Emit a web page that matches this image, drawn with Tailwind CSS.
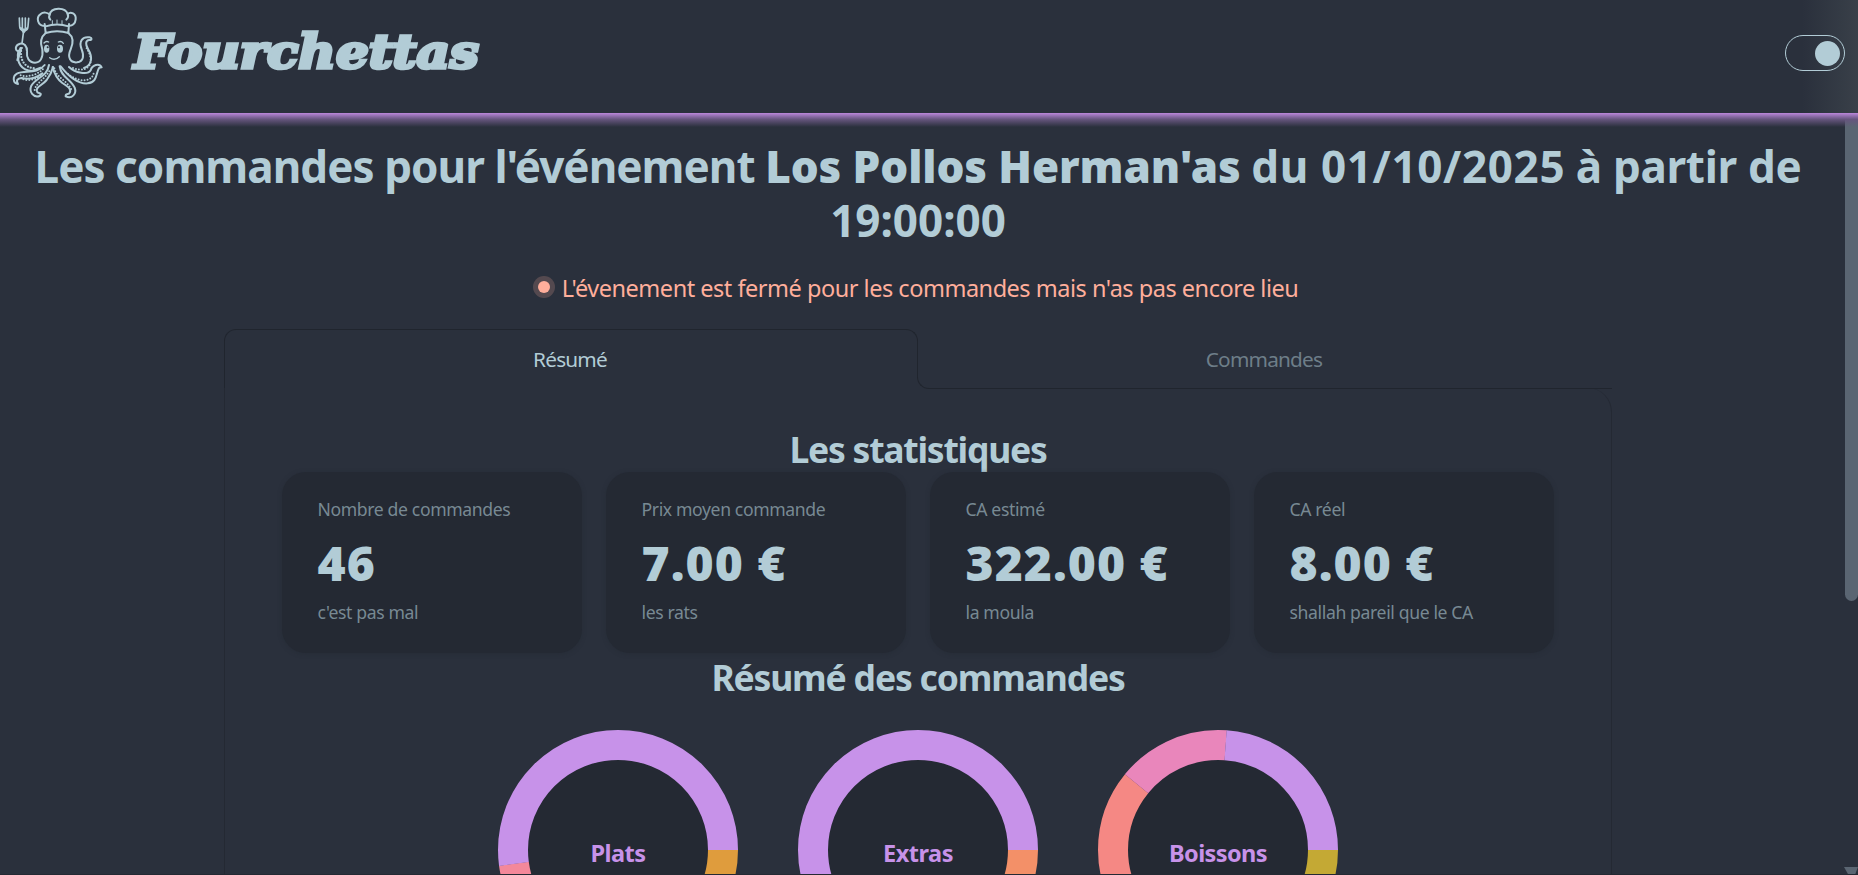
<!DOCTYPE html>
<html lang="fr">
<head>
<meta charset="utf-8">
<title>Fourchettas</title>
<script src="https://cdn.jsdelivr.net/npm/@tailwindcss/browser@4"></script>
</head>
<body class="bg-[#2a303c] text-[#b2ccd6] font-['Noto_Sans','Open_Sans',sans-serif]">
<div class="relative flex h-[875px] flex-col overflow-hidden">

  <header class="flex h-[113px] shrink-0 items-start justify-between bg-linear-to-r from-[#2a303c] from-97% to-[#394049] pr-[13px]">
    <div class="flex items-start">
      <svg class="h-[113px] w-[120px]" viewBox="0 0 360 339" fill="none" stroke="#b2ccd6" stroke-width="6" stroke-linecap="round" stroke-linejoin="round">
        <!-- chef hat -->
        <path d="M134 78C112 78 108 52 121 43C130 35 143 37 149 44C153 21 196 20 203 42C212 33 229 41 227 58C226 71 217 78 206 77"/>
        <path d="M149 44C146 50 147 55 151 59M203 42C206 48 204 54 199 59"/>
        <path d="M134 72L137 99M207 72L205 99M137 79Q171 68 206 79M137 99Q171 89 206 99"/>
        <path d="M157 62V71M171 60V70M186 62V71" stroke-width="3"/>
        <!-- head and inner arms -->
        <path d="M137 99C120 113 121 132 127 148C130 171 122 188 105 188C87 188 79 173 81 155C82 138 72 129 60 131C44 135 45 152 54 153C62 153 60 145 66 144"/>
        <path d="M205 99C222 112 219 132 212 148C201 172 211 189 231 187C252 184 252 166 245 148C235 123 248 109 268 112C277 114 276 122 268 120C256 121 256 134 264 147C279 171 276 195 252 204"/>
        <!-- raised arm with fork -->
        <path d="M55 152C48 190 66 211 96 213L122 203"/>
        <path d="M62 145L53 180" stroke-width="8"/>
        <path d="M63 153C61 184 76 203 104 205" stroke-dasharray="0 9" stroke-width="7"/>
        <path d="M58 54L59 79C59 95 83 96 84 79L86 55M67 54V84M76 54V84M71 92L66 130" stroke-width="5"/>
        <path d="M62 84Q70 92 81 85L71 97Z" fill="#b2ccd6"/>
        <!-- face -->
        <g fill="#b2ccd6" stroke="none"><ellipse cx="140" cy="146" rx="8" ry="12"/><ellipse cx="180" cy="146" rx="9" ry="12"/></g>
        <circle cx="143" cy="142" r="3" fill="#2a303c" stroke="none"/><circle cx="177" cy="142" r="3" fill="#2a303c" stroke="none"/>
        <path d="M132 129Q138 122 146 126M175 126Q184 122 190 130M149 173Q164 184 178 170" stroke-width="4"/>
        <!-- lower tentacles -->
        <path d="M134 195C110 225 75 209 51 221C37 229 38 249 54 252C47 240 53 235 65 234C88 240 112 231 127 220"/>
        <path d="M62 226C85 233 113 224 129 207M70 238C90 244 112 236 124 225" stroke-dasharray="0 9" stroke-width="6"/>
        <path d="M147 195C142 230 108 233 94 257C86 276 100 294 119 288C128 280 116 279 112 277C103 262 125 258 140 240C151 226 156 214 159 201"/>
        <path d="M104 270C108 248 133 240 148 213" stroke-dasharray="0 9" stroke-width="6"/>
        <path d="M158 201C162 218 170 236 187 249C204 260 218 268 207 281C201 283 196 281 197 289C216 298 231 281 224 263C211 235 184 233 179 199"/>
        <path d="M163 205C168 234 209 246 215 272" stroke-dasharray="0 9" stroke-width="6"/>
        <path d="M182 199C202 224 231 253 263 250C294 248 287 216 298 203L305 202C298 188 276 195 272 211C263 226 226 219 207 201"/>
        <path d="M204 222C231 244 273 251 281 220" stroke-dasharray="0 9" stroke-width="6"/>
        <path d="M219 204C246 216 274 206 272 178C271 161 263 152 259 142" stroke-dasharray="0 9" stroke-width="6"/>
      </svg>
      <h1 class="ml-[14px] mt-[20px] origin-left scale-x-[1.098] font-['DejaVu_Serif',serif] text-[47px] font-bold italic leading-[64px] [-webkit-text-stroke:3.5px_#b2ccd6]">Fourchettas</h1>
    </div>
    <div class="mt-[35px] flex h-9 w-[60px] items-center justify-end rounded-full border border-[#b2ccd6] pr-1">
      <div class="size-[25px] rounded-full bg-[#b2ccd6]"></div>
    </div>
  </header>

  <div class="absolute right-0 top-[113px] h-[488px] w-[13px] rounded-b-full bg-[#5a6572]"></div>
  <div class="absolute bottom-0 right-0 h-2 w-[14px] bg-[#5a6572] [clip-path:polygon(0_0,100%_0,78%_100%,32%_100%)]"></div>
  <div class="absolute left-0 top-[113px] h-[14px] w-full bg-linear-to-b from-[#bb87db] via-[#66557e] via-45% to-transparent"></div>
  <div class="absolute bottom-0 left-0 z-10 h-px w-full bg-[#242933]"></div>

  <main class="mr-[22px] flex flex-col items-center pt-[26px]">
    <h2 class="whitespace-nowrap text-center text-[44px] font-bold leading-[54px] tracking-[-0.95px]">Les commandes pour l'événement <span class="font-black tracking-[-0.1px]">Los Pollos Herman'as</span> <span class="tracking-[0.64px]">du 01/10/2025</span> <span class="tracking-[-0.3px]">à partir de</span><br><span class="tracking-normal">19:00:00</span></h2>

    <div class="mt-[25px] flex h-8 items-center text-[#ffae9b]">
      <span class="-mt-[2px] mr-3 size-3 rounded-full bg-[#ffae9b] ring-[5px] ring-[#ffae9b]/20"></span>
      <p class="text-[23.5px] leading-8 tracking-[-0.48px]">L'évenement est fermé pour les commandes mais n'as pas encore lieu</p>
    </div>

    <div class="mt-[25px] flex h-[60px] w-[1388px] text-[20.8px] leading-7 tracking-[-0.8px]">
      <div class="flex w-[694px] flex-col">
        <div class="h-12 rounded-t-xl border border-b-0 border-[#20252e] pt-[15px] pr-[2px] text-center">Résumé</div>
        <div class="grow border-l border-[#20252e]"></div>
      </div>
      <div class="relative w-[694px] pt-4 pr-[2px] text-center text-[#b2ccd6]/50">Commandes
        <div class="absolute -left-px bottom-0 right-0 top-3 rounded-bl-xl border-b border-l border-[#20252e]"></div>
      </div>
    </div>

    <section class="-mt-px flex h-[600px] w-[1388px] flex-col items-center rounded-tr-3xl border-x border-[#242933] pt-[41px]">
      <h3 class="text-[35.5px] font-bold leading-10 tracking-[-1.25px]">Les statistiques</h3>
      <div class="mt-[3px] flex gap-6 text-[17.6px] leading-6 tracking-[-0.37px]">
        <div class="h-[181px] w-[300px] rounded-3xl bg-[#242933] px-[35.5px] pt-[25px] shadow-[0_1px_4px_#24293399]">
          <p class="text-[#b2ccd6]/60">Nombre de commandes</p>
          <p class="mt-[18px] text-[48px] font-black leading-[48px] tracking-[1px]">46</p>
          <p class="mt-[13px] text-[#b2ccd6]/60">c'est pas mal</p>
        </div>
        <div class="h-[181px] w-[300px] rounded-3xl bg-[#242933] px-[35.5px] pt-[25px] shadow-[0_1px_4px_#24293399]">
          <p class="text-[#b2ccd6]/60">Prix moyen commande</p>
          <p class="mt-[18px] text-[48px] font-black leading-[48px] tracking-[1px]">7.00 €</p>
          <p class="mt-[13px] text-[#b2ccd6]/60">les rats</p>
        </div>
        <div class="h-[181px] w-[300px] rounded-3xl bg-[#242933] px-[35.5px] pt-[25px] shadow-[0_1px_4px_#24293399]">
          <p class="text-[#b2ccd6]/60">CA estimé</p>
          <p class="mt-[18px] text-[48px] font-black leading-[48px] tracking-[1px]">322.00 €</p>
          <p class="mt-[13px] text-[#b2ccd6]/60">la moula</p>
        </div>
        <div class="h-[181px] w-[300px] rounded-3xl bg-[#242933] px-[35.5px] pt-[25px] shadow-[0_1px_4px_#24293399]">
          <p class="text-[#b2ccd6]/60">CA réel</p>
          <p class="mt-[18px] text-[48px] font-black leading-[48px] tracking-[1px]">8.00 €</p>
          <p class="mt-[13px] text-[#b2ccd6]/60">shallah pareil que le CA</p>
        </div>
      </div>
      <h3 class="mt-1 text-[35.5px] font-bold leading-10 tracking-[-1.17px]">Résumé des commandes</h3>
      <div class="mt-[33px] flex gap-[60px]">
        <svg class="size-[240px]" viewBox="-120 -120 240 240" fill="none" stroke-width="30">
          <circle r="91" fill="#242933"/>
          <circle r="105" pathLength="360" stroke="#df9c3d" stroke-dasharray="90 270"/>
          <circle r="105" pathLength="360" stroke="#f4889a" stroke-dasharray="82.4 277.6" stroke-dashoffset="-90"/>
          <circle r="105" pathLength="360" stroke="#c792e9" stroke-dasharray="187.7 172.3" stroke-dashoffset="-172.3"/>
          <text y="12" text-anchor="middle" fill="#c792e9" class="text-[23.5px] font-bold tracking-[-0.5px]">Plats</text>
        </svg>
        <svg class="size-[240px]" viewBox="-120 -120 240 240" fill="none" stroke-width="30">
          <circle r="91" fill="#242933"/>
          <circle r="105" pathLength="360" stroke="#f39068" stroke-dasharray="90 270"/>
          <circle r="105" pathLength="360" stroke="#c792e9" stroke-dasharray="270 90" stroke-dashoffset="-90"/>
          <text y="12" text-anchor="middle" fill="#c792e9" class="text-[23.5px] font-bold tracking-[-0.5px]">Extras</text>
        </svg>
        <svg class="size-[240px]" viewBox="-120 -120 240 240" fill="none" stroke-width="30">
          <circle r="91" fill="#242933"/>
          <circle r="105" pathLength="360" stroke="#c4a934" stroke-dasharray="90 270"/>
          <circle r="105" pathLength="360" stroke="#f58884" stroke-dasharray="129.2 230.8" stroke-dashoffset="-90"/>
          <circle r="105" pathLength="360" stroke="#e986bb" stroke-dasharray="55.2 304.8" stroke-dashoffset="-219.1"/>
          <circle r="105" pathLength="360" stroke="#c792e9" stroke-dasharray="85.8 274.2" stroke-dashoffset="-274.2"/>
          <text y="12" text-anchor="middle" fill="#c792e9" class="text-[23.5px] font-bold tracking-[-0.6px]">Boissons</text>
        </svg>
      </div>
    </section>
  </main>
</div>
</body>
</html>
